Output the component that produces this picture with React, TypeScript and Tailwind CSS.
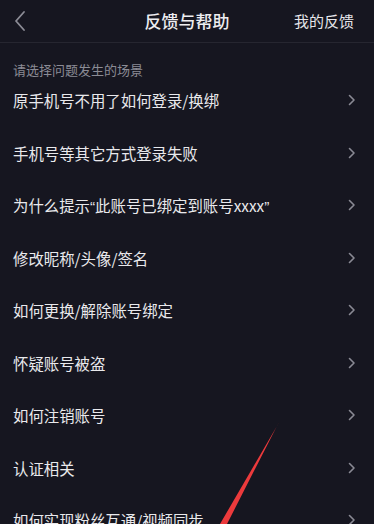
import React from 'react';

const Q = ({ c }: { c: string }) => (
  <span style={{ fontFamily: '"Liberation Sans", sans-serif' }}>{c}</span>
);

const items: React.ReactNode[] = [
  '原手机号不用了如何登录/换绑',
  '手机号等其它方式登录失败',
  <>
    为什么提示<Q c="“" />此账号已绑定到账号xxxx<Q c="”" />
  </>,
  '修改昵称/头像/签名',
  '如何更换/解除账号绑定',
  '怀疑账号被盗',
  '如何注销账号',
  '认证相关',
  '如何实现粉丝互通/视频同步',
];

const Chevron = () => (
  <svg width="8" height="12" viewBox="0 0 8 12" fill="none">
    <path d="M1.5 1.5L6 6L1.5 10.5" stroke="#8a8a94" strokeWidth="1.6" strokeLinecap="round" strokeLinejoin="round" />
  </svg>
);

export default function App() {
  return (
    <div
      className="relative w-[374px] h-[524px] overflow-hidden bg-[#161620] text-[#e9e9ec]"
      style={{ fontFamily: '"Noto Sans CJK SC", "Noto Sans", sans-serif' }}
    >
      {/* Header */}
      <div className="relative flex items-center h-[43px] border-b border-[#262630]">
        <div className="pl-[14px] pr-2">
          <svg width="12" height="22" viewBox="0 0 12 22" fill="none">
            <path d="M10 2L2 11L10 20" stroke="#8c8c96" strokeWidth="1.8" strokeLinecap="round" strokeLinejoin="round" />
          </svg>
        </div>
        <div className="absolute left-0 right-0 text-center text-[17px] leading-[22px] font-medium text-[#ededf0] pointer-events-none">
          反馈与帮助
        </div>
        <div className="ml-auto pr-[20px] text-[15px] leading-[20px] text-[#e6e6ea]">我的反馈</div>
      </div>

      {/* Section label */}
      <div className="pt-[18px] pl-[13px] text-[13px] leading-[18px] text-[#8b8b95]">请选择问题发生的场景</div>

      {/* List */}
      <div>
        {items.map((t, i) => (
          <div key={i} className="flex items-start h-[52.5px] pt-[11px] pl-[13px] pr-[18px]">
            <span className="flex-1 text-[15.4px] leading-[20px] whitespace-nowrap">{t}</span>
            <span className="h-[20px] flex items-center">
              <Chevron />
            </span>
          </div>
        ))}
      </div>

      {/* Red annotation stroke */}
      <svg className="absolute left-0 top-0 pointer-events-none" width="374" height="524" viewBox="0 0 374 524">
        <polygon points="279,422 227,524 220,524 277,426" fill="#ec3a3c" />
      </svg>
    </div>
  );
}
